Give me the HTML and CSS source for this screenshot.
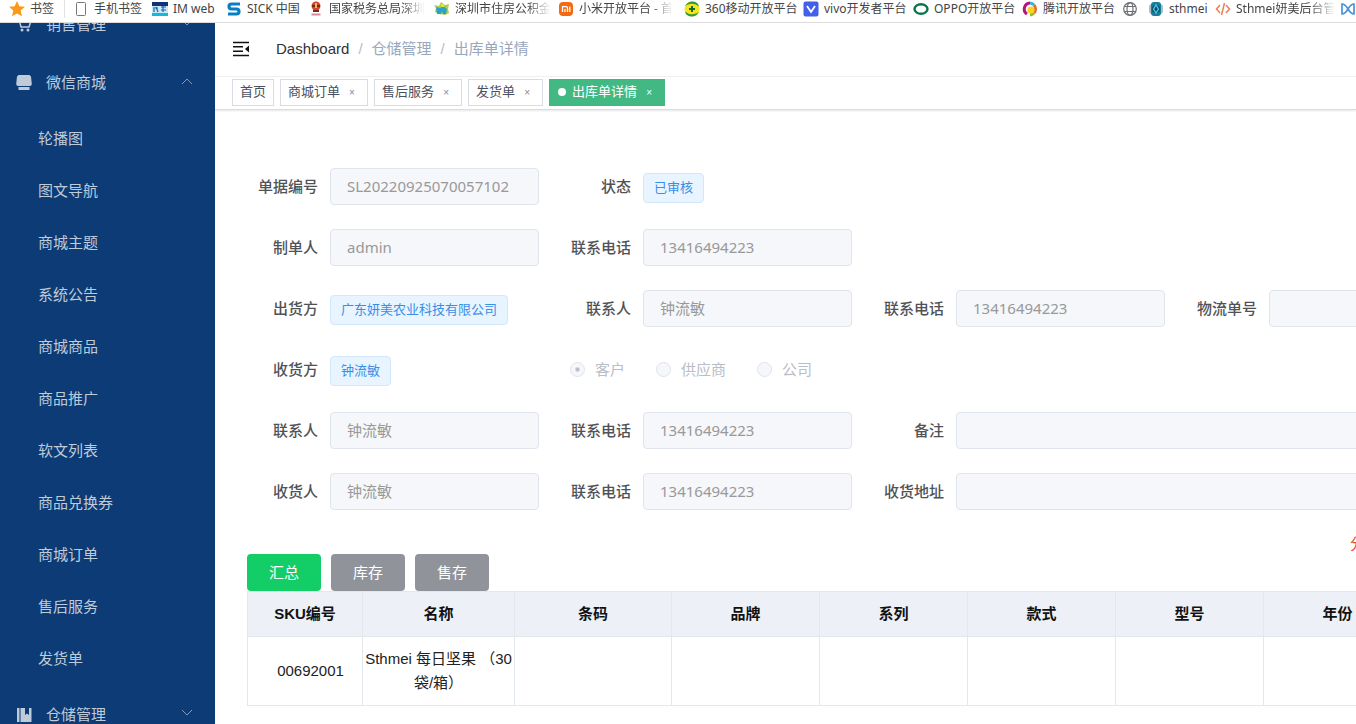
FILE: index.html
```html
<!DOCTYPE html>
<html lang="zh-CN">
<head>
<meta charset="utf-8">
<title>出库单详情</title>
<link rel="stylesheet" href="styles.css">
</head>
<body>
<nav class="bookmarks" aria-label="书签栏">
  <a href="#" class="bookmark"><svg viewBox="0 0 16 16"><path fill="#fb9a18" d="M8 0l2.3 5.2 5.7.6-4.300 3.800 1.300 5.700L8 12.400l-5 2.900 1.300-5.700L0 5.800l5.700-.6z"/></svg>书签</a>
  <a href="#" class="bookmark divided"><svg viewBox="0 0 16 16"><rect x="3.500" y="1.500" width="9" height="13" rx="1" fill="#fff" stroke="#777"/></svg>手机书签</a>
  <a href="#" class="bookmark"><svg viewBox="0 0 16 16"><path fill="#12307c" d="M0 1h16v5H0z"/><path fill="#17b9d6" d="M0 12h16v3H0z"/><path fill="#c9e9f7" d="M0 5h16v7H0z"/><path fill="none" stroke="#1d63b0" stroke-width="1.200" d="M2 6v5M4 6l2 5M6 7H3m6-1h5m-3-1v6M9 9h5"/></svg>IM web</a>
  <a href="#" class="bookmark"><svg viewBox="0 0 16 16"><path fill="none" stroke="#0a7ec4" stroke-width="3.200" d="M14 3H5.500Q3 3 3 5.500T5.500 8h5Q13 8 13 10.500T10.500 13H2"/></svg>SICK 中国</a>
  <a href="#" class="bookmark"><svg viewBox="0 0 16 16"><circle cx="8" cy="5" r="4.500" fill="#d5442d"/><path fill="#7b261b" d="M4 4h8v2H4zM5 9h6v2H5z"/><path stroke="#d98a95" stroke-width="2" d="M3.500 13.500h9"/><path fill="#efba45" d="M7 2h2v5H7z"/></svg><span class="fade">国家税务总局深圳</span></a>
  <a href="#" class="bookmark"><svg viewBox="0 0 16 16"><path fill="#afd044" d="M7 1l4 3 4-1-1 5 1 4-4 2-6-1-4-2 1-4-2-3 5 1z"/><path fill="#2ba2ce" d="M2 6l4 1 3-2 4 3-1 5H9l-1-3-1 3H3z"/><path fill="#f2d942" d="M7 3h3v3H7z"/></svg><span class="fade">深圳市住房公积金</span></a>
  <a href="#" class="bookmark"><svg viewBox="0 0 16 16"><rect x="1" y="1" width="14" height="14" rx="4" fill="#f26b12"/><path fill="none" stroke="#fff" stroke-width="1.300" d="M4.500 11V5.700H8q1.500 0 1.500 1.500V11M7 8v3m4.800-5.500V11"/></svg><span class="fade">小米开放平台 - 首</span></a>
  <a href="#" class="bookmark"><svg viewBox="0 0 16 16"><circle cx="8" cy="8" r="7.500" fill="#f8e51c"/><path fill="#2e9e3b" d="M1 5Q4 0 9 .5q5 .5 6 5Q11 2 6 3 3 3.500 1 5zm14 6q-3 5-8 4.500-5-.5-6-5Q5 14 10 13q3-.5 5-2z"/><path stroke="#176a2a" stroke-width="2" d="M8 5v6M5 8h6"/></svg>360移动开放平台</a>
  <a href="#" class="bookmark"><svg viewBox="0 0 16 16"><rect x=".5" y=".5" width="15" height="15" rx="2" fill="#415fe8"/><path fill="none" stroke="#fff" stroke-width="1.800" d="M4 5l4 6 4-6"/></svg>vivo开发者平台</a>
  <a href="#" class="bookmark"><svg viewBox="0 0 16 16"><ellipse cx="8" cy="8" rx="6.500" ry="4.800" fill="none" stroke="#08744a" stroke-width="2.400"/></svg>OPPO开放平台</a>
  <a href="#" class="bookmark"><svg viewBox="0 0 16 16"><g fill="none" stroke-width="3"><path stroke="#b9147b" d="M8 2A6 6 0 0 0 5 13"/><path stroke="#3db1e6" d="M8 2a6 6 0 0 1 4 2"/><path stroke="#df6e36" d="M12 4a6 6 0 0 1 0 8"/><path stroke="#87bf3c" d="M12 12a6 6 0 0 1-4 2"/></g><circle cx="9" cy="9" r="3.500" fill="#f9d419"/></svg>腾讯开放平台</a>
  <a href="#" class="bookmark" aria-label="网站"><svg viewBox="0 0 16 16"><g fill="none" stroke="#6b6e72" stroke-width="1.200"><circle cx="8" cy="8" r="6.300"/><ellipse cx="8" cy="8" rx="3" ry="6.300"/><path d="M2.500 5.500h11m-11 5h11"/></g></svg></a>
  <a href="#" class="bookmark"><svg viewBox="0 0 16 16"><rect x="1" y="3" width="14" height="10" rx="3" fill="#a9bdc6"/><rect x="3" y="1" width="10" height="14" rx="3" fill="#197d9c"/><circle cx="8" cy="8" r="4" fill="#16476a"/><path fill="none" stroke="#45d0df" stroke-width="1.400" d="M8 4L5.500 8 8 12l2.500-4z"/></svg>sthmei</a>
  <a href="#" class="bookmark"><svg viewBox="0 0 16 16"><path fill="none" stroke="#e78159" stroke-width="1.500" d="M5 4L1.500 8 5 12m6-8l3.500 4L11 12M9.500 2l-3 12"/></svg><span class="fade">Sthmei妍美后台管</span></a>
  <a href="#" class="bookmark" aria-label="更多"><svg viewBox="0 0 16 16"><path fill="none" stroke="#4a94d8" stroke-width="1.700" d="M2 3v10q3 0 6-5 3-5 6-5v10q-3 0-6-5-3-5-6-5z"/></svg></a>
</nav>
<div class="app">
  <aside class="sidebar">
    <nav class="menu">
      <a href="#" class="parent"><svg class="menu-icon" viewBox="0 0 16 16"><path fill="none" stroke="#bfcbd9" stroke-width="1.500" d="M0 2h3l2 8h8l2-6H4"/><circle cx="6" cy="13" r="1.500" fill="#bfcbd9"/><circle cx="12" cy="13" r="1.500" fill="#bfcbd9"/></svg><span>销售管理</span><svg class="arrow" viewBox="0 0 12 12"><path d="M1 1l5 5 5-5"/></svg></a>
      <a href="#" class="parent"><svg class="menu-icon" viewBox="0 0 16 16"><path fill="#bfcbd9" d="M2.500 0h11l1.500 1.500.8 7.500q0 2-2 2H2.200q-2 0-2-2L1 1.500zM2.500 12h11v3h-11z"/></svg><span>微信商城</span><svg class="arrow" viewBox="0 0 12 12"><path d="M1 7l5-5 5 5"/></svg></a>
      <div class="submenu">
        <a href="#" class="child">轮播图</a>
        <a href="#" class="child">图文导航</a>
        <a href="#" class="child">商城主题</a>
        <a href="#" class="child">系统公告</a>
        <a href="#" class="child">商城商品</a>
        <a href="#" class="child">商品推广</a>
        <a href="#" class="child">软文列表</a>
        <a href="#" class="child">商品兑换券</a>
        <a href="#" class="child">商城订单</a>
        <a href="#" class="child">售后服务</a>
        <a href="#" class="child">发货单</a>
      </div>
      <a href="#" class="parent"><svg class="menu-icon" viewBox="0 0 16 16"><path fill="#bfcbd9" d="M1 1h2.500v14H1zM4.500 1H9v7l2-1.500L13 8V1h2.500v14h-11z"/></svg><span>仓储管理</span><svg class="arrow" viewBox="0 0 12 12"><path d="M1 1l5 5 5-5"/></svg></a>
    </nav>
  </aside>
  <main class="main">
    <header class="navbar">
      <button class="toggle" aria-label="收起菜单"><svg viewBox="0 0 18 16"><path stroke="#111" stroke-width="1.500" d="M1 1.500h16M1 5.800h10M1 10.200h10M1 14.500h16"/><path fill="#111" d="M17 4.500v7L13 8z"/></svg></button>
      <nav class="breadcrumb" aria-label="面包屑"><a href="#">Dashboard</a><i>/</i><span>仓储管理</span><i>/</i><span>出库单详情</span></nav>
    </header>
    <nav class="tabs">
      <a href="#" class="tab">首页</a>
      <a href="#" class="tab">商城订单<span class="close">×</span></a>
      <a href="#" class="tab">售后服务<span class="close">×</span></a>
      <a href="#" class="tab">发货单<span class="close">×</span></a>
      <a href="#" class="tab active">出库单详情<span class="close">×</span></a>
    </nav>
    <form class="order">
      <div class="row">
        <div class="field"><label for="no">单据编号</label><input id="no" type="text" value="SL20220925070057102" disabled></div>
        <div class="field"><span class="label">状态</span><span class="tag">已审核</span></div>
      </div>
      <div class="row">
        <div class="field"><label for="maker">制单人</label><input id="maker" type="text" value="admin" disabled></div>
        <div class="field"><label for="makertel">联系电话</label><input id="makertel" type="text" value="13416494223" disabled></div>
      </div>
      <div class="row">
        <div class="field"><span class="label">出货方</span><span class="tag">广东妍美农业科技有限公司</span></div>
        <div class="field"><label for="c1">联系人</label><input id="c1" type="text" value="钟流敏" disabled></div>
        <div class="field"><label for="t1">联系电话</label><input id="t1" type="text" value="13416494223" disabled></div>
        <div class="field"><label for="ship">物流单号</label><input id="ship" type="text" disabled></div>
      </div>
      <div class="row">
        <div class="field"><span class="label">收货方</span><span class="tag">钟流敏</span></div>
        <div class="radios">
          <label class="radio"><input type="radio" name="kind" checked disabled>客户</label>
          <label class="radio"><input type="radio" name="kind" disabled>供应商</label>
          <label class="radio"><input type="radio" name="kind" disabled>公司</label>
        </div>
      </div>
      <div class="row">
        <div class="field"><label for="c2">联系人</label><input id="c2" type="text" value="钟流敏" disabled></div>
        <div class="field"><label for="t2">联系电话</label><input id="t2" type="text" value="13416494223" disabled></div>
        <div class="field wide"><label for="memo">备注</label><input id="memo" type="text" disabled></div>
      </div>
      <div class="row">
        <div class="field"><label for="c3">收货人</label><input id="c3" type="text" value="钟流敏" disabled></div>
        <div class="field"><label for="t3">联系电话</label><input id="t3" type="text" value="13416494223" disabled></div>
        <div class="field wide"><label for="addr">收货地址</label><input id="addr" type="text" disabled></div>
      </div>
    </form>
    <section class="details">
      <p class="notice">分</p>
      <div class="actions">
        <button class="btn primary">汇总</button>
        <button class="btn">库存</button>
        <button class="btn">售存</button>
      </div>
      <table class="goods">
        <colgroup><col class="sku"><col class="name"><col class="code"><col><col><col><col><col></colgroup>
        <thead><tr><th>SKU编号</th><th>名称</th><th>条码</th><th>品牌</th><th>系列</th><th>款式</th><th>型号</th><th>年份</th></tr></thead>
        <tbody><tr><td class="indent">00692001</td><td>Sthmei 每日坚果 （30袋/箱）</td><td></td><td></td><td></td><td></td><td></td><td></td></tr></tbody>
      </table>
    </section>
  </main>
</div>
</body>
</html>
```
FILE: styles.css
```css
* { box-sizing: border-box; }
body {
  margin: 0;
  height: 100vh;
  display: flex;
  flex-direction: column;
  overflow: hidden;
  background: #fff;
  font: 15px/20px "Liberation Sans", "Noto Sans CJK SC", sans-serif;
  color: #303133;
}
a { color: inherit; text-decoration: none; }
button, input { font: inherit; }

.bookmarks {
  flex: none;
  display: grid;
  grid-template-columns: 55px 88px 74px 82px 126px 124px 126px 119px 110px 109px 100px 26px 67px 125px 20px;
  padding-left: 9px;
  height: 23px;
  padding-bottom: 4px;
  border-bottom: 1px solid #dcdcdc;
  font: 12px/18px "Noto Sans", "Noto Sans CJK SC", sans-serif;
  color: #444;
}
.bookmark {
  display: flex;
  align-items: center;
  gap: 5px;
  white-space: nowrap;
}
.bookmark svg { width: 16px; height: 16px; flex: none; }
.divided { border-left: 1px solid #e2e2e2; padding-left: 8px; }
.fade {
  overflow: hidden;
  max-width: 100px;
  mask-image: linear-gradient(90deg, #000 75%, transparent);
}

.app { flex: 1; min-height: 0; display: flex; }
.sidebar {
  flex: none;
  width: 215px;
  overflow: hidden;
  background: #0d3b75;
  color: #bfcbd9;
}
.menu { margin-top: -27px; }
.submenu { padding: 1px 0; }
.parent {
  display: flex;
  align-items: center;
  height: 58px;
  padding: 0 22px 0 16px;
}
.menu-icon { width: 16px; height: 16px; margin-right: 14px; }
.arrow {
  width: 12px;
  height: 12px;
  margin-left: auto;
  fill: none;
  stroke: #8396b2;
}
.child { display: flex; align-items: center; height: 52px; padding-left: 38px; }

.main { flex: 1; min-width: 0; overflow: hidden; }
.navbar {
  display: flex;
  align-items: center;
  gap: 26px;
  height: 54px;
  padding: 0 17px 2px;
  border-bottom: 1px solid #f0f0f0;
}
.toggle { width: 18px; height: 20px; padding: 0; border: 0; background: none; }
.toggle svg { display: block; width: 18px; height: 16px; }
.breadcrumb { display: flex; color: #97a8be; }
.breadcrumb i { margin: 0 9px; font-style: normal; color: #b4bccb; }
.breadcrumb a { color: #303133; }

.tabs {
  display: flex;
  gap: 6px;
  padding: 2px 17px 3px;
  border-bottom: 1px solid #d8dce5;
  box-shadow: 0 1px 2px #0000001a;
  font-size: 13px;
  color: #495060;
}
.tab {
  display: flex;
  align-items: center;
  height: 27px;
  padding: 0 7px 2px;
  border: 1px solid #d8dce5;
}
.close { width: 20px; padding: 3px 0 0 4px; text-align: center; font-size: 10px; color: #888; }
.active { background: #42b983; border-color: #42b983; color: #fff; }
.active .close { color: #fff; }
.active::before {
  content: "";
  width: 8px;
  height: 8px;
  margin: 0 6px 0 1px;
  border-radius: 50%;
  background: #fff;
}

.order { display: grid; gap: 24px; padding: 58px 0 0 11px; }
.row { display: grid; grid-template-columns: repeat(4, minmax(313px, 1fr)); height: 37px; }
.field { display: flex; align-items: center; }
.wide { grid-column: span 2; }
.field label, .label {
  flex: none;
  width: 104px;
  padding-right: 12px;
  text-align: right;
  font-weight: 500;
  color: #505256;
}
.field input {
  flex: 1;
  min-width: 0;
  height: 37px;
  padding: 0 16px 2px;
  border: 1px solid #e0e4ec;
  border-radius: 4px;
  background: #f5f7fa;
  font-family: "Noto Sans", "Noto Sans CJK SC", sans-serif;
  color: #999;
}
.tag {
  height: 30px;
  margin-top: 2px;
  padding: 0 10px;
  border: 1px solid #d3e7fb;
  border-radius: 4px;
  background: #e8f4ff;
  font-size: 13px;
  line-height: 28px;
  color: #3a8ee6;
}
.radios { display: flex; align-items: center; gap: 31px; padding-left: 31px; color: #b9bdc6; }
.radio { display: flex; align-items: center; gap: 10px; }
.radio input {
  appearance: none;
  width: 15px;
  height: 15px;
  margin: 0;
  border: 1px solid #dfe3eb;
  border-radius: 50%;
  background: #f5f7fa;
}
.radio input:checked { background: radial-gradient(circle, #b6bac4 1px, #f5f7fa 3px); }

.details { padding-left: 32px; }
.notice { width: 6px; margin: 24px 0 0 auto; white-space: nowrap; color: #dc4a3d; }
.actions { display: flex; gap: 10px; }
.btn {
  height: 37px;
  padding: 0 22px;
  border: 0;
  border-radius: 4px;
  background: #909399;
  color: #fff;
}
.primary { background: #13ce66; }
.goods {
  table-layout: fixed;
  width: max(100%, 1164px);
  border-collapse: collapse;
  line-height: 24px;
  text-align: center;
  color: #222;
}
.goods col { width: 148px; }
.goods .sku { width: 115px; }
.goods .name { width: 152px; }
.goods .code { width: 157px; }
.goods th, .goods td { border: 1px solid #e3e7ee; padding: 10px 0; }
.goods th { background: #edf1f7; color: #111; }
.goods .indent { padding-left: 11px; }
```
